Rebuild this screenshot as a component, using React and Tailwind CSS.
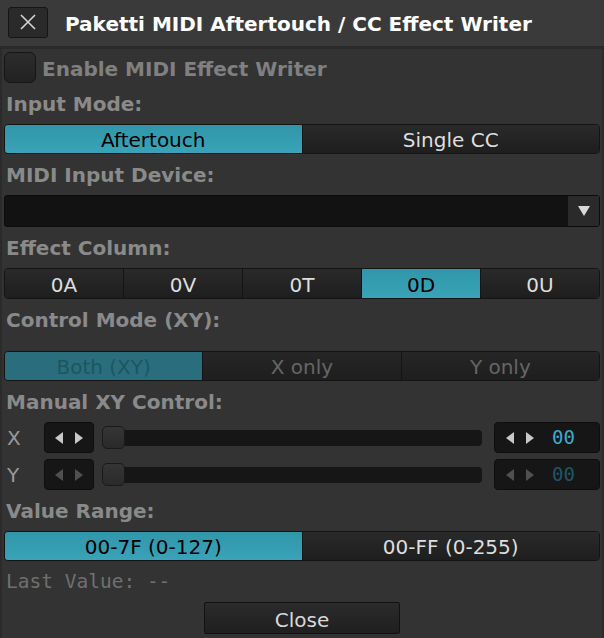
import { useState } from 'react'

const FONT = "font-['DejaVu_Sans',sans-serif]"
const MONO = "font-['DejaVu_Sans_Mono',monospace]"

function Label({ children, tall }) {
  return (
    <div className={`${tall ? 'h-[52px]' : 'h-[41px]'} pt-[9px] pl-[2px] leading-[24px] text-[20px] font-bold text-[#8a8a8a]`}>
      {children}
    </div>
  )
}

function Segmented({ items, active, onPick, h = 'h-[30px]', dim = false }) {
  return (
    <div className={`flex ${h} rounded-[4px] border border-[#141414] overflow-hidden`}>
      {items.map((it, i) => {
        const on = i === active
        let cls
        if (on) {
          cls = dim
            ? 'bg-[#2a6e7d] text-[#1d5561]'
            : 'bg-linear-to-b from-[#3196aa] to-[#39a3b8] text-black'
        } else {
          cls = dim
            ? 'bg-linear-to-b from-[#262626] to-[#1e1e1e] text-[#666666]'
            : 'bg-linear-to-b from-[#2a2a2a] to-[#1e1e1e] text-[#dedede]'
        }
        return (
          <button
            key={it}
            onClick={() => onPick(i)}
            className={`flex-1 flex items-center justify-center pt-[2px] text-[20px] leading-none ${cls} ${i > 0 ? 'border-l border-[#141414]' : ''}`}
          >
            {it}
          </button>
        )
      })}
    </div>
  )
}

function Arrows({ dim }) {
  const c = dim ? '#505050' : '#c8c8c8'
  return (
    <svg width="28" height="12" viewBox="0 0 28 12">
      <polygon points="0,6 8,0 8,12" fill={c} />
      <polygon points="28,6 20,0 20,12" fill={c} />
    </svg>
  )
}

function XYRow({ axis, dim }) {
  return (
    <div className="flex items-center h-[31px]">
      <div className="w-[40px] pl-[3px] text-[20px] text-[#9a9a9a]">{axis}</div>
      <div className="w-[50px] h-full flex items-center justify-center rounded-[4px] bg-[#161616] border border-[#0e0e0e]">
        <Arrows dim={dim} />
      </div>
      <div className="ml-[8px] w-[380px] h-[16px] rounded-[4px] bg-[#161616] flex items-center">
        <div className="w-[23px] h-[23px] rounded-[5px] bg-linear-to-b from-[#353535] to-[#2a2a2a] border border-[#1a1a1a]" />
      </div>
      <div className="ml-[12px] flex-1 h-full flex items-center rounded-[4px] bg-[#161616] border border-[#0e0e0e] pl-[11px]">
        <Arrows dim={dim} />
        <span className={`ml-[18px] ${MONO} text-[19px] ${dim ? 'text-[#1f5663]' : 'text-[#39acce]'}`}>00</span>
      </div>
    </div>
  )
}

export default function App() {
  const [mode, setMode] = useState(0)
  const [col, setCol] = useState(3)
  const [xy, setXy] = useState(0)
  const [range, setRange] = useState(0)
  const [enabled, setEnabled] = useState(false)

  return (
    <div className={`w-[604px] h-[638px] bg-[#333333] ${FONT} flex flex-col overflow-hidden`}>
      <div className="h-[46px] bg-[#3a3a3a] flex items-center pl-[8px] shrink-0">
        <button className="w-[40px] h-[31px] mt-[-2px] rounded-[3px] bg-[#2a2a2a] border border-[#151515] flex items-center justify-center">
          <svg width="16" height="16" viewBox="0 0 16 16">
            <path d="M1 1 L15 15 M15 1 L1 15" stroke="#d4d4d4" strokeWidth="1.6" />
          </svg>
        </button>
        <div className="ml-[17px] mt-[2px] text-[20px] font-bold text-white">Paketti MIDI Aftertouch / CC Effect Writer</div>
      </div>
      <div className="h-[3px] bg-[#2a2a2a] shrink-0" />
      <div className="flex-1 border-l-2 border-r-2 border-[#2b2b2b] px-[2px] pt-[3px]">
        <div className="flex items-center h-[31px]">
          <button
            onClick={() => setEnabled(!enabled)}
            className="w-[32px] h-[31px] rounded-[6px] bg-linear-to-b from-[#2c2c2c] to-[#222222] border border-[#151515]"
          />
          <span className="ml-[6px] mt-[2px] text-[20px] font-bold text-[#808080]">Enable MIDI Effect Writer</span>
        </div>

        <Label>Input Mode:</Label>
        <Segmented items={['Aftertouch', 'Single CC']} active={mode} onPick={setMode} />

        <Label>MIDI Input Device:</Label>
        <div className="flex h-[32px] rounded-[3px] border border-[#0c0c0c] bg-[#121212]">
          <div className="flex-1" />
          <div className="w-[31px] bg-[#2a2a2a] flex items-center justify-center">
            <svg width="12" height="10" viewBox="0 0 12 10">
              <polygon points="0,0 12,0 6,10" fill="#d8d8d8" />
            </svg>
          </div>
        </div>

        <Label>Effect Column:</Label>
        <Segmented items={['0A', '0V', '0T', '0D', '0U']} active={col} onPick={setCol} h="h-[31px]" />

        <Label tall>Control Mode (XY):</Label>
        <Segmented items={['Both (XY)', 'X only', 'Y only']} active={xy} onPick={setXy} dim />

        <Label>Manual XY Control:</Label>
        <div className="flex flex-col gap-[6px]">
          <XYRow axis="X" />
          <XYRow axis="Y" dim />
        </div>

        <Label>Value Range:</Label>
        <Segmented items={['00-7F (0-127)', '00-FF (0-255)']} active={range} onPick={setRange} />

        <div className={`h-[41px] pt-[9px] pl-[2px] leading-[24px] text-[19.5px] ${MONO} text-[#707070]`}>Last Value: --</div>
        <div className="flex justify-center">
          <button className="w-[196px] h-[32px] pt-[2px] rounded-[2px] border border-[#111111] bg-linear-to-b from-[#2b2b2b] to-[#1f1f1f] text-[20px] text-[#d8d8d8]">
            Close
          </button>
        </div>
      </div>
    </div>
  )
}
